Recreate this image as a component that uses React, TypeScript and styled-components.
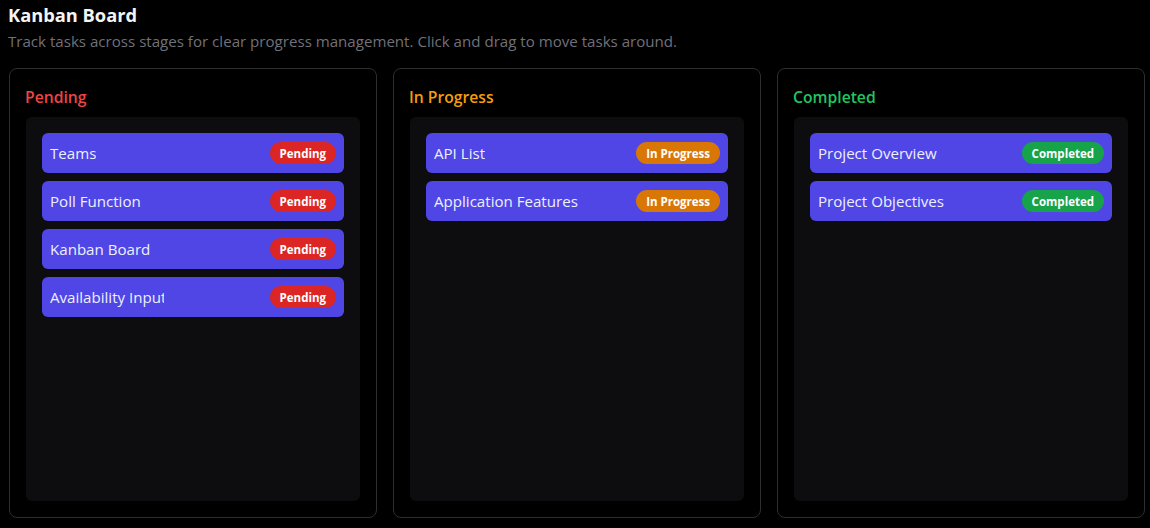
import React from "react";
import styled, { createGlobalStyle } from "styled-components";

const Global = createGlobalStyle`
  html, body { margin: 0; padding: 0; background: #000; }
  body { font-family: "Open Sans", "Noto Sans", sans-serif; color: #f4f4f5; }
  * { box-sizing: border-box; }
`;

const Page = styled.div`
  padding: 0 8px;
  width: 1150px;
  height: 528px;
  background: #000;
  overflow: hidden;
`;

const Title = styled.h1`
  margin: 0;
  font-size: 18.3px;
  line-height: 30px;
  font-weight: 700;
  color: #f4f4f5;
`;

const Subtitle = styled.p`
  margin: 1px 0 0;
  font-size: 15.1px;
  line-height: 20px;
  color: #71717a;
`;

const Board = styled.div`
  margin-top: 17px;
  margin-left: 1px;
  display: grid;
  grid-template-columns: repeat(3, 368px);
  gap: 16px;
`;

const Column = styled.section`
  height: 450px;
  border: 1px solid #2e2e32;
  border-radius: 8px;
  padding: 16px;
  display: flex;
  flex-direction: column;
  gap: 8px;
`;

const ColumnTitle = styled.h2<{ $color: string }>`
  margin: 0 0 0 -1px;
  font-size: 15.7px;
  line-height: 24px;
  font-weight: 600;
  color: ${(p) => p.$color};
`;

const List = styled.div`
  flex: 1;
  background: #0d0d0f;
  border-radius: 6px;
  padding: 16px;
  display: flex;
  flex-direction: column;
  gap: 8px;
`;

const Card = styled.div`
  height: 40px;
  background: #4f46e5;
  border-radius: 6px;
  padding: 0 8px;
  display: flex;
  align-items: center;
  justify-content: space-between;
`;

const CardTitle = styled.span<{ $clip?: number }>`
  font-size: 15.1px;
  color: #eef0ff;
  white-space: nowrap;
  overflow: hidden;
  ${(p) => (p.$clip ? `max-width: ${p.$clip}px;` : "")}
`;

const Badge = styled.span<{ $bg: string }>`
  height: 22px;
  padding: 0 10px;
  border-radius: 999px;
  background: ${(p) => p.$bg};
  color: #fff;
  font-size: 11.5px;
  font-weight: 700;
  display: inline-flex;
  align-items: center;
`;

type Task = { title: string; clip?: number };
type Col = { name: string; color: string; badge: string; tasks: Task[] };

const columns: Col[] = [
  {
    name: "Pending",
    color: "#ef4444",
    badge: "#dc2626",
    tasks: [
      { title: "Teams" },
      { title: "Poll Function" },
      { title: "Kanban Board" },
      { title: "Availability Input", clip: 114 },
    ],
  },
  {
    name: "In Progress",
    color: "#f59e0b",
    badge: "#d97706",
    tasks: [{ title: "API List" }, { title: "Application Features" }],
  },
  {
    name: "Completed",
    color: "#22c55e",
    badge: "#16a34a",
    tasks: [{ title: "Project Overview" }, { title: "Project Objectives" }],
  },
];

export default function App() {
  return (
    <Page>
      <Global />
      <Title>Kanban Board</Title>
      <Subtitle>
        Track tasks across stages for clear progress management. Click and drag to move tasks around.
      </Subtitle>
      <Board>
        {columns.map((c) => (
          <Column key={c.name}>
            <ColumnTitle $color={c.color}>{c.name}</ColumnTitle>
            <List>
              {c.tasks.map((t) => (
                <Card key={t.title}>
                  <CardTitle $clip={t.clip}>{t.title}</CardTitle>
                  <Badge $bg={c.badge}>{c.name}</Badge>
                </Card>
              ))}
            </List>
          </Column>
        ))}
      </Board>
    </Page>
  );
}
